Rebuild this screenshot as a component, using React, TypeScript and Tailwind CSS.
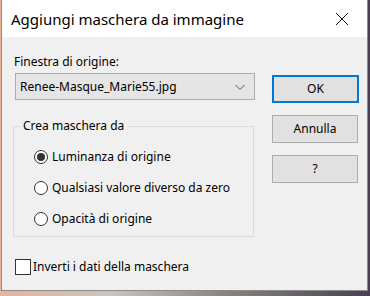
import { useState } from 'react';

const options = ['Luminanza di origine', 'Qualsiasi valore diverso da zero', 'Opacità di origine'];

function Radio({ label, checked, onSelect }: { label: string; checked: boolean; onSelect: () => void }) {
  return (
    <button type="button" onClick={onSelect} className="flex items-center h-[16px] text-left">
      <span className="w-[14px] h-[14px] rounded-full border border-[#333333] bg-white flex items-center justify-center">
        {checked && <span className="w-[8px] h-[8px] rounded-full bg-[#333333]" />}
      </span>
      <span className="ml-[4px]">{label}</span>
    </button>
  );
}

function DialogButton({ label, primary }: { label: string; primary?: boolean }) {
  return (
    <button
      type="button"
      className={
        primary
          ? 'w-[87px] h-[28px] bg-[#e1e1e1] border-2 border-[#0078d7] text-[12px]'
          : 'w-[86px] h-[28px] bg-[#e1e1e1] border border-[#adadad] text-[12px]'
      }
    >
      {label}
    </button>
  );
}

export default function App() {
  const [mode, setMode] = useState(0);
  const [invert, setInvert] = useState(false);

  return (
    <div className="w-[370px] h-[296px] overflow-hidden bg-[linear-gradient(90deg,#e8b49a_0%,#c9c4bf_30%,#8a8580_60%,#4a3f52_100%)] font-['Noto_Sans',sans-serif] text-black">
      <div className="ml-[1px] w-[367px] h-[291px] border-x border-b border-[#8c8c8c] flex flex-col bg-[#f0f0f0]">
        {/* title bar */}
        <div className="h-[37px] bg-white flex items-center justify-between shrink-0">
          <span className="ml-[9px] text-[15px] leading-[20px]">Aggiungi maschera da immagine</span>
          <svg width="46" height="30" viewBox="0 0 46 30" className="mr-[2px]">
            <path d="M17 9 L29 21 M29 9 L17 21" stroke="#111" strokeWidth="1" fill="none" />
          </svg>
        </div>

        {/* body */}
        <div className="flex text-[12px] leading-[16px]">
          <div className="ml-[11px] mt-[17px] w-[241px] flex flex-col">
            <label className="ml-[1px]">Finestra di origine:</label>
            <div className="ml-[2px] mt-[3px] w-[240px] h-[27px] bg-[#e5e5e5] border border-[#adadad] flex items-center justify-between">
              <span className="ml-[4px]">Renee-Masque_Marie55.jpg</span>
              <svg width="12" height="8" viewBox="0 0 12 8" className="mr-[8px]">
                <path d="M1.5 2 L6 6.5 L10.5 2" stroke="#555" strokeWidth="1" fill="none" />
              </svg>
            </div>

            <fieldset className="mt-[18px] w-[241px] h-[119px] border border-[#dcdcdc]">
              <legend className="ml-[6px] px-[3px]">Crea maschera da</legend>
              <div className="ml-[20px] mt-[15px] flex flex-col gap-[15px]">
                {options.map((o, i) => (
                  <Radio key={o} label={o} checked={mode === i} onSelect={() => setMode(i)} />
                ))}
              </div>
            </fieldset>

            <button type="button" onClick={() => setInvert(!invert)} className="mt-[22px] ml-[2px] flex items-center text-left">
              <span className="w-[16px] h-[16px] border border-[#333333] bg-white flex items-center justify-center">
                {invert && (
                  <svg width="12" height="12" viewBox="0 0 12 12">
                    <path d="M2 6 L5 9 L10 3" stroke="#333" strokeWidth="1.5" fill="none" />
                  </svg>
                )}
              </span>
              <span className="ml-[2px]">Inverti i dati della maschera</span>
            </button>
          </div>

          <div className="ml-[18px] mt-[38px] flex flex-col gap-[12px]">
            <DialogButton label="OK" primary />
            <DialogButton label="Annulla" />
            <DialogButton label="?" />
          </div>
        </div>
      </div>
    </div>
  );
}
